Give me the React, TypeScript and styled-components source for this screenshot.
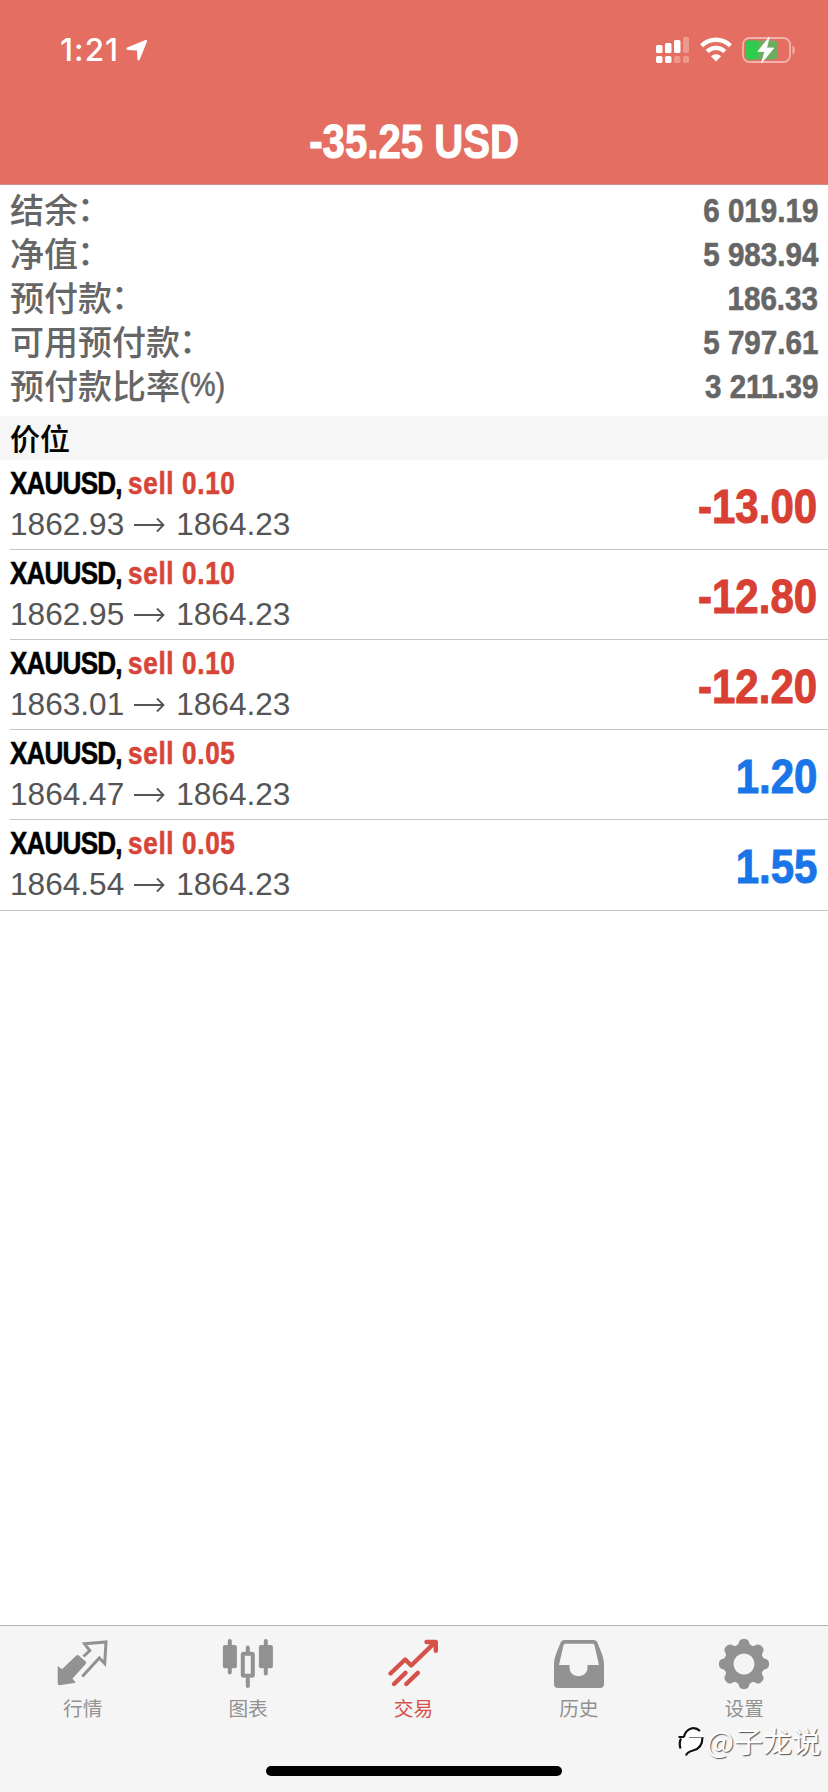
import React from 'react';
import styled, { createGlobalStyle } from 'styled-components';

const Global = createGlobalStyle`
  * { box-sizing: border-box; }
  html, body { margin: 0; background: #fff; }
  body { font-family: "Liberation Sans", "Noto Sans CJK SC", sans-serif; }
`;

const Screen = styled.div`
  position: relative;
  width: 828px;
  height: 1792px;
  display: flex;
  flex-direction: column;
  background: #fff;
  overflow: hidden;
`;

const Header = styled.header`
  height: 185px;
  flex: none;
  background: #e46e61;
  border-bottom: 1px solid #cf8b84;
  color: #fff;
`;

const StatusBar = styled.div`
  height: 100px;
  display: flex;
  justify-content: space-between;
  align-items: center;
  padding: 0 32px 0 60px;
`;

const Clock = styled.div`
  display: flex;
  align-items: center;
  gap: 7px;
  font: 500 31.5px/40px Inter, sans-serif;
  letter-spacing: 1px;
`;

const StatusIcons = styled.div`
  display: flex;
  align-items: center;
  gap: 10px;
`;

const Condensed = styled.span<{ $size: number; $scale: number; $origin?: string; $color?: string; $weight?: number; $stroke?: number }>`
  display: inline-block;
  font-family: "Liberation Sans", sans-serif;
  font-weight: ${p => p.$weight ?? 700};
  font-size: ${p => p.$size}px;
  color: ${p => p.$color ?? 'inherit'};
  -webkit-text-stroke: ${p => p.$stroke ?? 0.6}px currentColor;
  transform: scaleX(${p => p.$scale});
  transform-origin: ${p => p.$origin ?? 'left'} center;
  white-space: pre;
`;

const Title = styled.h1`
  margin: 0;
  height: 84px;
  line-height: 84px;
  text-align: center;
`;

const Summary = styled.section`
  height: 231px;
  flex: none;
  padding: 3px 10px 0;
  color: #666;
`;

const SummaryRow = styled.div`
  height: 44px;
  display: flex;
  justify-content: space-between;
  align-items: center;
`;

const SummaryLabel = styled.span`
  display: flex;
  height: 44px;
  font: 500 34px/42px "Noto Sans CJK SC", sans-serif;
`;

const Colon = styled.span`
  line-height: 37px;
  margin-left: -1px;
`;

const SectionTitle = styled.h2`
  margin: 0;
  height: 44px;
  flex: none;
  padding-left: 10px;
  background: #f6f6f6;
  color: #000;
  font: 500 30px/43px "Noto Sans CJK SC", sans-serif;
  -webkit-text-stroke: 0.2px currentColor;
`;

const PositionRow = styled.article<{ $last: boolean }>`
  height: ${p => (p.$last ? 91 : 90)}px;
  flex: none;
  margin-left: ${p => (p.$last ? 0 : 10)}px;
  padding: 0 11px 0 ${p => (p.$last ? 10 : 0)}px;
  border-bottom: 1px solid #c4c4c6;
  display: flex;
  justify-content: space-between;
`;

const PositionInfo = styled.div`
  display: flex;
  flex-direction: column;
`;

const Symbol = styled.div`
  height: 47px;
  line-height: 46px;
  color: #000;
`;

const Pair = styled.span`
  letter-spacing: -1px;
`;

const Volume = styled.span`
  color: #d64538;
  letter-spacing: 0.8px;
`;

const Prices = styled.div`
  display: flex;
  align-items: center;
  gap: 10px;
  height: 35px;
  font-size: 31.6px;
  line-height: 35px;
  color: #555;
`;

const Profit = styled.div`
  line-height: 94px;
  height: 89px;
`;

const Spacer = styled.div`
  flex: 1;
`;

const TabBar = styled.nav`
  height: 167px;
  flex: none;
  display: flex;
  align-items: flex-start;
  background: #f5f5f5;
  border-top: 1px solid #b0b3b0;
`;

const Tab = styled.div<{ $active?: boolean }>`
  width: 165.4px;
  display: flex;
  flex-direction: column;
  align-items: center;
  padding-top: 11px;
  color: ${p => (p.$active ? '#d5524a' : '#929292')};
`;

const TabLabel = styled.span`
  margin-top: 5px;
  font: 400 19.7px/28px "Noto Sans CJK SC", sans-serif;
`;

const HomeIndicator = styled.div`
  position: absolute;
  left: 266px;
  bottom: 16px;
  width: 296px;
  height: 10px;
  border-radius: 5px;
  background: #000;
`;

const Watermark = styled.div`
  position: absolute;
  right: 7px;
  bottom: 30px;
  display: flex;
  align-items: center;
  gap: 1px;
  color: #fff;
  font: 400 29px/44px "Noto Sans CJK SC", sans-serif;
  text-shadow: 1px 1px 1px #555;
`;

const LocationIcon = () => (
  <svg width="22" height="22" viewBox="0 0 22 22">
    <path d="M1.200 8.400 19.600 1.100c1-.4 1.800.3 1.400 1.300l-7.200 18.200c-.6 1.300-2.300 1-2.400-.4L11 11.500 1.900 11C.2 10.900-.2 9 1.200 8.400z" fill="#fff" />
  </svg>
);

const SignalIcon = () => (
  <svg width="34" height="28" viewBox="0 0 34 28" fill="#fff">
    <rect x="0" y="9" width="6.500" height="8" rx="1.500" />
    <rect x="9" y="7" width="6.500" height="10" rx="1.500" />
    <rect x="18" y="4" width="6.500" height="13" rx="1.500" />
    <rect x="27" y="1" width="6" height="16" rx="1.500" opacity=".3" />
    <rect x="0" y="20" width="6.500" height="7" rx="1.800" />
    <rect x="9" y="20" width="6.500" height="7" rx="1.800" />
    <rect x="18" y="20" width="6.500" height="7" rx="1.800" opacity=".3" />
    <rect x="27" y="20" width="6" height="7" rx="1.800" opacity=".3" />
  </svg>
);

const WifiIcon = () => (
  <svg width="32" height="26" viewBox="0 0 32 26" fill="none" stroke="#fff" strokeWidth="4.400">
    <path d="M1.600 8.700a20.400 20.400 0 0 1 28.800 0" />
    <path d="M7.200 14.500a12.500 12.500 0 0 1 17.600 0" />
    <path d="M11 19.300a7.200 7.200 0 0 1 10 0L16 24.600z" fill="#fff" stroke="none" />
  </svg>
);

const BatteryIcon = () => (
  <svg width="54" height="28" viewBox="0 0 54 28">
    <rect x="1" y="2" width="47" height="24" rx="6.500" fill="none" stroke="#f2b3ac" strokeWidth="1.800" />
    <path d="M50.500 9.500c3 1.500 3 7.500 0 9z" fill="#f2b3ac" />
    <rect x="3.500" y="4.500" width="32" height="19" rx="4" fill="#6cae60" />
    <rect x="3.500" y="4.500" width="13" height="19" rx="4" fill="#2ecc4c" />
    <path d="M27.300 1 15.800 15.500h7l-3.300 11.500L31.800 12h-7.200z" fill="#fff" stroke="#fff" strokeWidth=".8" strokeLinejoin="round" />
  </svg>
);

const QuotesIcon = () => (
  <svg width="52" height="52" viewBox="0 0 52 52" fill="none">
    <path d="M.7 29 5 32.300 19 18.800a2 2 0 0 1 3 0l6.500 5.400a2 2 0 0 1 0 3L15.500 41.500l3.200 4.200L2.500 48.300a2 2 0 0 1-1.800-2z" fill="#929292" />
    <path d="m26.500 19.500 6.300-5.800-5.300-6.900 21.500-1.800L47.700 26.500l-5.400-5.500-17 18.500" stroke="#929292" strokeWidth="3" />
  </svg>
);

const ChartIcon = () => (
  <svg width="52" height="54" viewBox="0 0 52 54" fill="#929292">
    <path d="M7.800 4v31.500M43.800 4v32.500M25.800 10.500v6M25.800 42v7" stroke="#929292" strokeWidth="4" strokeLinecap="round" />
    <rect x=".9" y="8" width="14" height="23.300" rx="2" />
    <rect x="36.900" y="8" width="14" height="23.300" rx="2" />
    <rect x="20.800" y="16.700" width="10" height="22" rx="1" fill="none" stroke="#929292" strokeWidth="4" />
  </svg>
);

const TradeIcon = () => (
  <svg width="52" height="52" viewBox="0 0 52 52" fill="none" stroke="#d5524a" strokeWidth="4.400" strokeLinecap="round" strokeLinejoin="round">
    <path d="m3.500 36.500 14.700-14 6 6L48 5.300M39.500 5H48.800v8.800M7 47l11.500-11.200M19.300 47l11.500-11.200" />
  </svg>
);

const HistoryIcon = () => (
  <svg width="52" height="52" viewBox="0 0 52 52" fill="#929292" fillRule="evenodd">
    <path d="M12 3h28c3 0 4.300 1.200 5 4C47.500 14 51 20 51 28v19a4 4 0 0 1-4 4H5a4 4 0 0 1-4-4V28C1 20 4.500 14 7 7c.7-2.800 2-4 5-4zm1 3.800c-1.500 0-2.200.6-2.600 2L6 28h10.500v2.500c0 11.500 18 11.500 18 0V28H46L41.600 8.800c-.4-1.400-1.100-2-2.600-2z" />
  </svg>
);

const GearIcon = () => {
  const teeth = [0, 45, 90, 135, 180, 225, 270, 315];
  return (
    <svg width="52" height="53" viewBox="0 0 52 53">
      <g fill="#929292">
        <circle cx="26" cy="27" r="19.800" />
        {teeth.map(a => (
          <path key={a} d="M17 9.500c2.800-.8 3.500-2.700 4.300-5C22 2.600 23.500 2 26 2s4 .6 4.700 2.500c.8 2.300 1.500 4.200 4.300 5l-4 8h-10z" transform={`rotate(${a} 26 27)`} />
        ))}
      </g>
      <circle cx="26" cy="27" r="10.500" fill="#f5f5f5" />
    </svg>
  );
};

const WatermarkLogo = () => (
  <svg width="30" height="34" viewBox="0 0 30 34" fill="none">
    <circle cx="15" cy="17" r="13" fill="#fff" />
    <path d="M2.500 14H8M8 14c1.500-8 10-12 16-6M5 15.500c-1.500 3-1.500 7-.5 10M26.500 14c0 9-4.500 12.500-9.500 13.500-4.500 1-6 2-7 5" stroke="#111" strokeWidth="2.200" />
    <path d="M13 14.500h13.500" stroke="#777" strokeWidth="1" />
  </svg>
);

const summary = [
  { label: '结余', value: '6 019.19' },
  { label: '净值', value: '5 983.94' },
  { label: '预付款', value: '186.33' },
  { label: '可用预付款', value: '5 797.61' },
  { label: '预付款比率', unit: '(%)', value: '3 211.39' },
];

const positions = [
  { volume: '0.10', open: '1862.93', profit: '-13.00' },
  { volume: '0.10', open: '1862.95', profit: '-12.80' },
  { volume: '0.10', open: '1863.01', profit: '-12.20' },
  { volume: '0.05', open: '1864.47', profit: '1.20' },
  { volume: '0.05', open: '1864.54', profit: '1.55' },
];

const tabs = [
  { label: '行情', Icon: QuotesIcon },
  { label: '图表', Icon: ChartIcon },
  { label: '交易', Icon: TradeIcon, active: true },
  { label: '历史', Icon: HistoryIcon },
  { label: '设置', Icon: GearIcon },
];

const IconSlot = styled.div`
  height: 52px;
`;

const Arrow = () => (
  <svg width="32" height="16" viewBox="0 0 32 16" fill="none" stroke="#555" strokeWidth="1.800">
    <path d="M0 8h29.500M23 1.500 29.500 8 23 14.500" />
  </svg>
);

export default function App() {
  return (
    <Screen>
      <Global />
      <Header>
        <StatusBar>
          <Clock>1:21<LocationIcon /></Clock>
          <StatusIcons>
            <SignalIcon />
            <WifiIcon />
            <BatteryIcon />
          </StatusIcons>
        </StatusBar>
        <Title><Condensed $size={47.5} $scale={0.845} $origin="center" $stroke={1}>-35.25 USD</Condensed></Title>
      </Header>
      <Summary>
        {summary.map(({ label, unit, value }) => (
          <SummaryRow key={label}>
            <SummaryLabel>
              {label}
              {unit
                ? <Condensed $size={33} $scale={0.88} $weight={400}>{unit}</Condensed>
                : <Colon>：</Colon>}
            </SummaryLabel>
            <Condensed $size={34} $scale={0.87} $origin="right">{value}</Condensed>
          </SummaryRow>
        ))}
      </Summary>
      <SectionTitle>价位</SectionTitle>
      {positions.map((p, i) => (
        <PositionRow key={p.open} $last={i === positions.length - 1}>
          <PositionInfo>
            <Symbol>
              <Condensed $size={32} $scale={0.815}>
                <Pair>XAUUSD, </Pair>
                <Volume>sell {p.volume}</Volume>
              </Condensed>
            </Symbol>
            <Prices>{p.open}<Arrow />1864.23</Prices>
          </PositionInfo>
          <Profit>
            <Condensed $size={48} $scale={0.875} $origin="right" $stroke={1} $color={p.profit.startsWith('-') ? '#d84033' : '#1a76e8'}>{p.profit}</Condensed>
          </Profit>
        </PositionRow>
      ))}
      <Spacer />
      <TabBar>
        {tabs.map(({ label, Icon, active }) => (
          <Tab key={label} $active={active}>
            <IconSlot><Icon /></IconSlot>
            <TabLabel>{label}</TabLabel>
          </Tab>
        ))}
      </TabBar>
      <HomeIndicator />
      <Watermark><WatermarkLogo />@子龙说</Watermark>
    </Screen>
  );
}
